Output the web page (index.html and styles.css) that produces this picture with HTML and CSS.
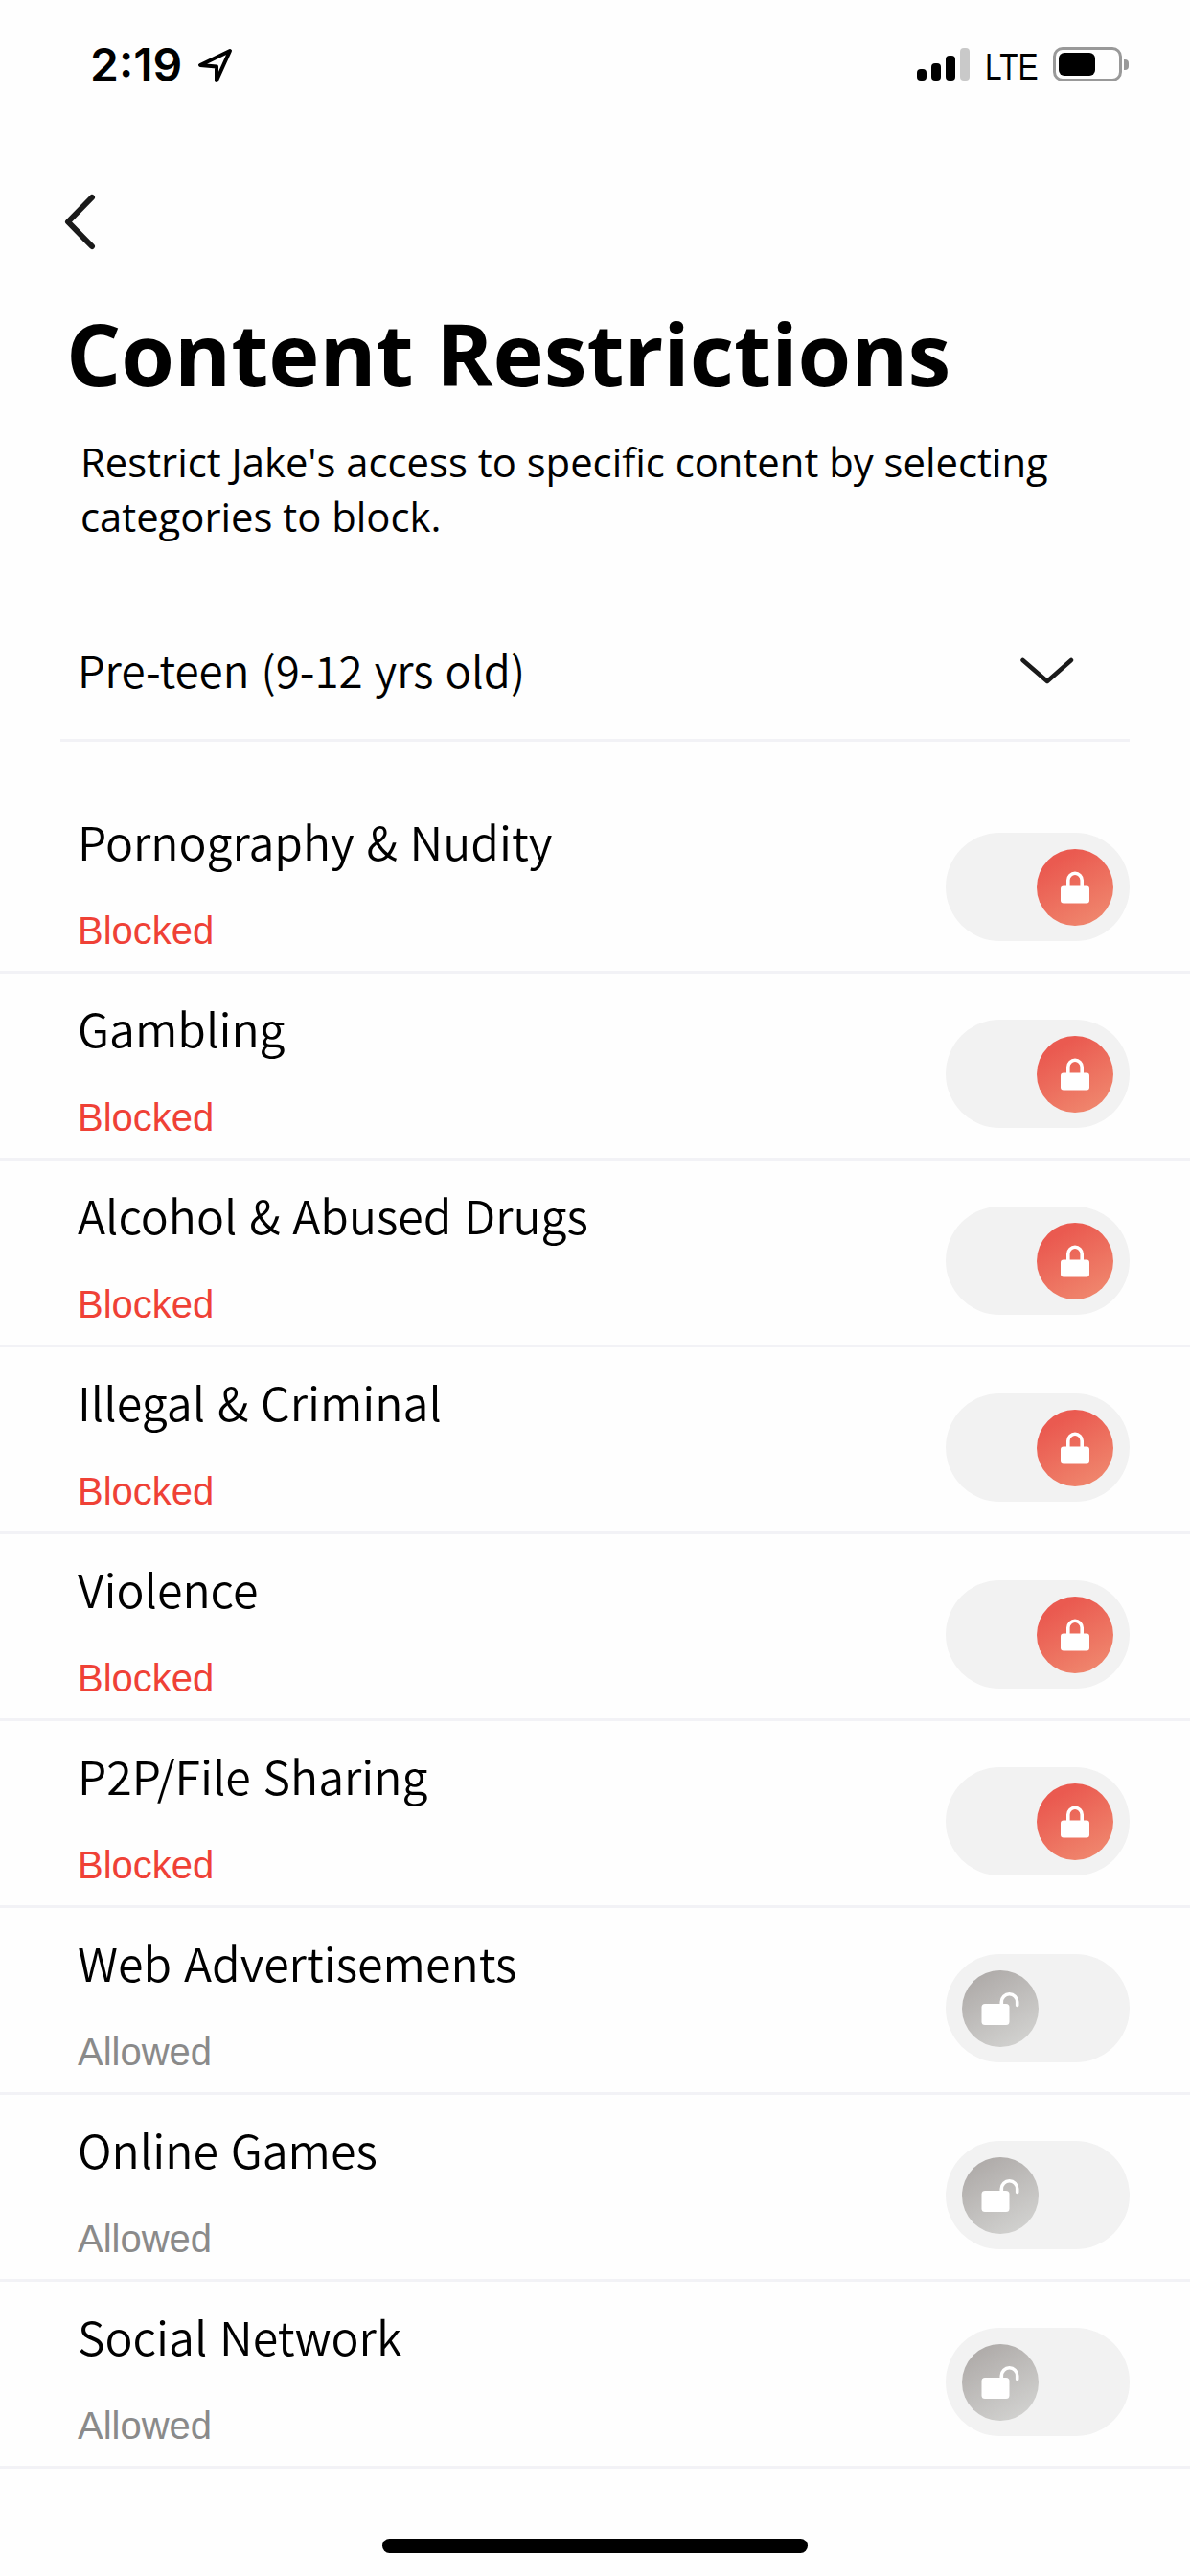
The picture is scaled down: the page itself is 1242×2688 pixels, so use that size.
FILE: index.html
```html
<!DOCTYPE html>
<html lang="en">
<head>
<meta charset="utf-8">
<title>Content Restrictions</title>
<link rel="stylesheet" href="styles.css">
</head>
<body>
<div class="screen">
  <header class="status">
    <div class="status-left">
      <span class="time">2:19</span>
      <svg class="loc" width="40" height="40" viewBox="0 0 40 40"><path d="M36 5 5 20 22 21.5 22 36Z" fill="none" stroke="#000" stroke-width="4" stroke-linejoin="round"/></svg>
    </div>
    <div class="status-right">
      <div class="signal"><i class="b1"></i><i class="b2"></i><i class="b3"></i><i class="b4"></i></div>
      <div class="lte-box"><span class="lte">LTE</span></div>
      <div class="battery"><div class="battery-body"><div class="battery-fill"></div></div><div class="battery-nub"></div></div>
    </div>
  </header>
  <nav class="nav">
    <svg width="40" height="64" viewBox="0 0 40 64"><path d="M32 8 7 33.5 32 59" fill="none" stroke="#1a1a1a" stroke-width="6" stroke-linecap="round" stroke-linejoin="round"/></svg>
  </nav>
  <h1 class="title">Content Restrictions</h1>
  <p class="desc">Restrict Jake's access to specific content by selecting categories to block.</p>
  <div class="select">
    <span class="select-label">Pre-teen (9-12 yrs old)</span>
    <svg width="60" height="34" viewBox="0 0 60 34"><path d="M2.5 8 28 30 53 8" fill="none" stroke="#1a1a1a" stroke-width="4.5" stroke-linecap="round" stroke-linejoin="round"/></svg>
  </div>
  <ul class="list">
    <li class="row"><div class="row-text"><div class="name">Pornography &amp; Nudity</div><div class="state blocked">Blocked</div></div><div class="toggle on"><div class="knob"><svg width="34" height="36" viewBox="0 0 34 36"><path d="M9.8 18V10.5a7.2 7.2 0 0 1 14.4 0V18" fill="none" stroke="#fff" stroke-width="3.6"/><rect x="2" y="16.5" width="30" height="18" rx="3" fill="#fff"/></svg></div></div></li>
    <li class="row"><div class="row-text"><div class="name">Gambling</div><div class="state blocked">Blocked</div></div><div class="toggle on"><div class="knob"><svg width="34" height="36" viewBox="0 0 34 36"><path d="M9.8 18V10.5a7.2 7.2 0 0 1 14.4 0V18" fill="none" stroke="#fff" stroke-width="3.6"/><rect x="2" y="16.5" width="30" height="18" rx="3" fill="#fff"/></svg></div></div></li>
    <li class="row"><div class="row-text"><div class="name">Alcohol &amp; Abused Drugs</div><div class="state blocked">Blocked</div></div><div class="toggle on"><div class="knob"><svg width="34" height="36" viewBox="0 0 34 36"><path d="M9.8 18V10.5a7.2 7.2 0 0 1 14.4 0V18" fill="none" stroke="#fff" stroke-width="3.6"/><rect x="2" y="16.5" width="30" height="18" rx="3" fill="#fff"/></svg></div></div></li>
    <li class="row"><div class="row-text"><div class="name">Illegal &amp; Criminal</div><div class="state blocked">Blocked</div></div><div class="toggle on"><div class="knob"><svg width="34" height="36" viewBox="0 0 34 36"><path d="M9.8 18V10.5a7.2 7.2 0 0 1 14.4 0V18" fill="none" stroke="#fff" stroke-width="3.6"/><rect x="2" y="16.5" width="30" height="18" rx="3" fill="#fff"/></svg></div></div></li>
    <li class="row"><div class="row-text"><div class="name">Violence</div><div class="state blocked">Blocked</div></div><div class="toggle on"><div class="knob"><svg width="34" height="36" viewBox="0 0 34 36"><path d="M9.8 18V10.5a7.2 7.2 0 0 1 14.4 0V18" fill="none" stroke="#fff" stroke-width="3.6"/><rect x="2" y="16.5" width="30" height="18" rx="3" fill="#fff"/></svg></div></div></li>
    <li class="row"><div class="row-text"><div class="name">P2P/File Sharing</div><div class="state blocked">Blocked</div></div><div class="toggle on"><div class="knob"><svg width="34" height="36" viewBox="0 0 34 36"><path d="M9.8 18V10.5a7.2 7.2 0 0 1 14.4 0V18" fill="none" stroke="#fff" stroke-width="3.6"/><rect x="2" y="16.5" width="30" height="18" rx="3" fill="#fff"/></svg></div></div></li>
    <li class="row"><div class="row-text"><div class="name">Web Advertisements</div><div class="state allowed">Allowed</div></div><div class="toggle off"><div class="knob"><svg width="40" height="36" viewBox="0 0 40 36"><path d="M21.3 15V11a8.2 8.2 0 0 1 16.4 0v3.5" fill="none" stroke="#fff" stroke-width="3.6" stroke-linecap="round"/><rect x="0.5" y="13" width="29" height="22" rx="3.5" fill="#fff"/></svg></div></div></li>
    <li class="row"><div class="row-text"><div class="name">Online Games</div><div class="state allowed">Allowed</div></div><div class="toggle off"><div class="knob"><svg width="40" height="36" viewBox="0 0 40 36"><path d="M21.3 15V11a8.2 8.2 0 0 1 16.4 0v3.5" fill="none" stroke="#fff" stroke-width="3.6" stroke-linecap="round"/><rect x="0.5" y="13" width="29" height="22" rx="3.5" fill="#fff"/></svg></div></div></li>
    <li class="row"><div class="row-text"><div class="name">Social Network</div><div class="state allowed">Allowed</div></div><div class="toggle off"><div class="knob"><svg width="40" height="36" viewBox="0 0 40 36"><path d="M21.3 15V11a8.2 8.2 0 0 1 16.4 0v3.5" fill="none" stroke="#fff" stroke-width="3.6" stroke-linecap="round"/><rect x="0.5" y="13" width="29" height="22" rx="3.5" fill="#fff"/></svg></div></div></li>
  </ul>
  <div class="home"><div class="home-bar"></div></div>
</div>
</body>
</html>
```
FILE: styles.css
```css
* { box-sizing: border-box; }
html, body { margin: 0; padding: 0; background: #fefefe; }
.screen { width: 1242px; height: 2688px; overflow: hidden; display: flex; flex-direction: column; color: #000; font-family: "Noto Sans CJK SC", "Noto Sans", sans-serif; }
.status { height: 136px; padding: 44px 64px 0 94px; display: flex; justify-content: space-between; align-items: flex-start; }
.status-left { display: flex; align-items: center; height: 48px; gap: 14px; }
.time { font-family: Inter, sans-serif; font-weight: 600; font-size: 48px; line-height: 48px; }
.loc { display: block; }
.status-right { display: flex; align-items: flex-start; padding-top: 5px; }
.signal { display: flex; align-items: flex-end; gap: 5px; width: 55px; height: 34px; margin-top: 1px; margin-right: 16px; }
.signal i { display: block; width: 10px; background: #000; border-radius: 4px; }
.signal .b1 { height: 12px; }
.signal .b2 { height: 18px; }
.signal .b3 { height: 26px; }
.signal .b4 { height: 34px; background: #c9c9c9; }
.lte-box { width: 71px; padding-top: 2px; }
.lte { display: block; font-family: "Liberation Sans", sans-serif; font-size: 38px; line-height: 38px; transform: scaleX(0.83); transform-origin: left center; }
.battery { display: flex; align-items: center; height: 36px; gap: 2px; }
.battery-body { width: 72px; height: 36px; border: 3px solid #999; border-radius: 10px; padding: 3px; }
.battery-fill { width: 38px; height: 24px; background: #000; border-radius: 6px; }
.battery-nub { width: 5px; height: 11px; background: #999; border-radius: 0 4px 4px 0; }
.nav { height: 182px; padding: 62px 0 0 64px; }
.nav svg { display: block; }
.title { margin: 0; padding-left: 69px; font-family: "Open Sans", sans-serif; font-weight: 700; font-size: 90px; line-height: 100px; }
.desc { margin: 0; padding: 35px 70px 0 84px; font-family: "Open Sans", sans-serif; font-size: 41.8px; line-height: 57px; }
.select { margin: 57px 63px 0 63px; height: 150px; display: flex; justify-content: space-between; align-items: center; padding: 0 54px 0 18px; border-bottom: 3px solid #f2f2f6; }
.select-label { font-size: 45.7px; font-weight: 350; word-spacing: 2px; }
.list { list-style: none; margin: 47px 0 0; padding: 0; }
.row { height: 195px; padding: 0 63px 0 81px; display: flex; justify-content: space-between; align-items: flex-start; border-bottom: 3px solid #f2f2f6; }
.row-text { padding-top: 23px; }
.name { font-size: 48.25px; line-height: 66px; font-weight: 350; word-spacing: 2px; }
.state { font-family: "Liberation Sans", sans-serif; font-size: 40px; line-height: 46px; margin-top: 38px; }
.blocked { color: #ef4136; }
.allowed { color: #8a8a8a; }
.toggle { width: 192px; height: 113px; margin-top: 48px; border-radius: 57px; background: #f2f2f2; display: flex; align-items: center; padding: 0 17px; }
.toggle.on { justify-content: flex-end; }
.knob { width: 80px; height: 80px; border-radius: 50%; display: flex; align-items: center; justify-content: center; }
.on .knob { background: linear-gradient(150deg, #ea5a50 20%, #f08a70 95%); }
.off .knob { background: linear-gradient(150deg, #aeaaa8 10%, #d2d2d0 90%); }
.knob svg { display: block; }
.home { flex: 1; display: flex; justify-content: center; padding-top: 73px; }
.home-bar { width: 444px; height: 15px; border-radius: 8px; background: #000; }
```
